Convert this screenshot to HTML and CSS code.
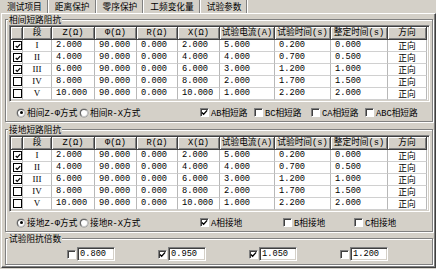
FILE: index.html
```html
<!DOCTYPE html>
<html>
<head>
<meta charset="utf-8">
<link rel="stylesheet" href="styles.css">
</head>
<body>
<div class="tabs">
  <div class="tab">测试项目</div>
  <div class="tab">距离保护</div>
  <div class="tab">零序保护</div>
  <div class="tab">工频变化量</div>
  <div class="tab">试验参数</div>
</div>
<div class="panel">
  <fieldset class="group g1">
    <legend>相间短路阻抗</legend>
    <div class="list">
      <table class="grid">
        <colgroup>
          <col class="c-cb"><col class="c-seg"><col class="c-z"><col class="c-phi"><col class="c-r"><col class="c-x"><col class="c-i"><col class="c-t"><col class="c-set"><col class="c-dir">
        </colgroup>
        <thead>
          <tr><th></th><th>段</th><th>Z(Ω)</th><th>Φ(Ω)</th><th>R(Ω)</th><th>X(Ω)</th><th>试验电流(A)</th><th>试验时间(s)</th><th>整定时间(s)</th><th>方向</th></tr>
        </thead>
        <tbody>
          <tr><td class="cbc"><span class="tcb on"><svg viewBox="0 0 8 8" width="6" height="6"><path d="M1 4 L3 6 L7 1.5" fill="none" stroke="#000" stroke-width="1.6"/></svg></span></td><td class="seg">I</td><td>2.000</td><td>90.000</td><td>0.000</td><td>2.000</td><td>5.000</td><td>0.200</td><td>0.000</td><td class="dir">正向</td></tr>
          <tr><td class="cbc"><span class="tcb on"><svg viewBox="0 0 8 8" width="6" height="6"><path d="M1 4 L3 6 L7 1.5" fill="none" stroke="#000" stroke-width="1.6"/></svg></span></td><td class="seg">II</td><td>4.000</td><td>90.000</td><td>0.000</td><td>4.000</td><td>4.000</td><td>0.700</td><td>0.500</td><td class="dir">正向</td></tr>
          <tr><td class="cbc"><span class="tcb on"><svg viewBox="0 0 8 8" width="6" height="6"><path d="M1 4 L3 6 L7 1.5" fill="none" stroke="#000" stroke-width="1.6"/></svg></span></td><td class="seg">III</td><td>6.000</td><td>90.000</td><td>0.000</td><td>6.000</td><td>3.000</td><td>1.200</td><td>1.000</td><td class="dir">正向</td></tr>
          <tr><td class="cbc"><span class="tcb"></span></td><td class="seg">IV</td><td>8.000</td><td>90.000</td><td>0.000</td><td>8.000</td><td>2.000</td><td>1.700</td><td>1.500</td><td class="dir">正向</td></tr>
          <tr><td class="cbc"><span class="tcb"></span></td><td class="seg">V</td><td>10.000</td><td>90.000</td><td>0.000</td><td>10.000</td><td>1.000</td><td>2.200</td><td>2.000</td><td class="dir">正向</td></tr>
        </tbody>
      </table>
    </div>
    <div class="opts">
      <label class="opt w-r1"><span class="radio on"></span>相间Z-Φ方式</label>
      <label class="opt w-r2"><span class="radio"></span>相间R-X方式</label>
      <label class="opt w-ab"><span class="cb"><svg viewBox="0 0 8 8" width="7" height="7"><path d="M1 4 L3 6 L7 1.5" fill="none" stroke="#000" stroke-width="1.5"/></svg></span>AB相短路</label>
      <label class="opt w-bc"><span class="cb"></span>BC相短路</label>
      <label class="opt w-ca"><span class="cb"></span>CA相短路</label>
      <label class="opt"><span class="cb"></span>ABC相短路</label>
    </div>
  </fieldset>

  <fieldset class="group g2">
    <legend>接地短路阻抗</legend>
    <div class="list">
      <table class="grid">
        <colgroup>
          <col class="c-cb"><col class="c-seg"><col class="c-z"><col class="c-phi"><col class="c-r"><col class="c-x"><col class="c-i"><col class="c-t"><col class="c-set"><col class="c-dir">
        </colgroup>
        <thead>
          <tr><th></th><th>段</th><th>Z(Ω)</th><th>Φ(Ω)</th><th>R(Ω)</th><th>X(Ω)</th><th>试验电流(A)</th><th>试验时间(s)</th><th>整定时间(s)</th><th>方向</th></tr>
        </thead>
        <tbody>
          <tr><td class="cbc"><span class="tcb on"><svg viewBox="0 0 8 8" width="6" height="6"><path d="M1 4 L3 6 L7 1.5" fill="none" stroke="#000" stroke-width="1.6"/></svg></span></td><td class="seg">I</td><td>2.000</td><td>90.000</td><td>0.000</td><td>2.000</td><td>5.000</td><td>0.200</td><td>0.000</td><td class="dir">正向</td></tr>
          <tr><td class="cbc"><span class="tcb on"><svg viewBox="0 0 8 8" width="6" height="6"><path d="M1 4 L3 6 L7 1.5" fill="none" stroke="#000" stroke-width="1.6"/></svg></span></td><td class="seg">II</td><td>4.000</td><td>90.000</td><td>0.000</td><td>4.000</td><td>4.000</td><td>0.700</td><td>0.500</td><td class="dir">正向</td></tr>
          <tr><td class="cbc"><span class="tcb on"><svg viewBox="0 0 8 8" width="6" height="6"><path d="M1 4 L3 6 L7 1.5" fill="none" stroke="#000" stroke-width="1.6"/></svg></span></td><td class="seg">III</td><td>6.000</td><td>90.000</td><td>0.000</td><td>6.000</td><td>3.000</td><td>1.200</td><td>1.000</td><td class="dir">正向</td></tr>
          <tr><td class="cbc"><span class="tcb"></span></td><td class="seg">IV</td><td>8.000</td><td>90.000</td><td>0.000</td><td>8.000</td><td>2.000</td><td>1.700</td><td>1.500</td><td class="dir">正向</td></tr>
          <tr><td class="cbc"><span class="tcb"></span></td><td class="seg">V</td><td>10.000</td><td>90.000</td><td>0.000</td><td>10.000</td><td>1.000</td><td>2.200</td><td>2.000</td><td class="dir">正向</td></tr>
        </tbody>
      </table>
    </div>
    <div class="opts">
      <label class="opt w-r1"><span class="radio on"></span>接地Z-Φ方式</label>
      <label class="opt w-r2"><span class="radio"></span>接地R-X方式</label>
      <label class="opt w-a"><span class="cb"><svg viewBox="0 0 8 8" width="7" height="7"><path d="M1 4 L3 6 L7 1.5" fill="none" stroke="#000" stroke-width="1.5"/></svg></span>A相接地</label>
      <label class="opt w-b"><span class="cb"></span>B相接地</label>
      <label class="opt"><span class="cb"></span>C相接地</label>
    </div>
  </fieldset>

  <fieldset class="group g3">
    <legend>试验阻抗倍数</legend>
    <div class="mults">
      <div class="mult"><span class="cb"></span><span class="field">0.800</span></div>
      <div class="mult"><span class="cb"><svg viewBox="0 0 8 8" width="7" height="7"><path d="M1 4 L3 6 L7 1.5" fill="none" stroke="#000" stroke-width="1.5"/></svg></span><span class="field">0.950</span></div>
      <div class="mult"><span class="cb"><svg viewBox="0 0 8 8" width="7" height="7"><path d="M1 4 L3 6 L7 1.5" fill="none" stroke="#000" stroke-width="1.5"/></svg></span><span class="field">1.050</span></div>
      <div class="mult"><span class="cb"></span><span class="field">1.200</span></div>
    </div>
  </fieldset>
</div>
</body>
</html>
```

FILE: styles.css
```css
* { box-sizing: border-box; }
html, body { margin: 0; padding: 0; }
body {
  width: 436px;
  height: 269px;
  overflow: hidden;
  background: #d4d0c8;
  color: #000;
  font-family: "Liberation Mono", "Noto Sans CJK SC", monospace;
  font-size: 8.7px;
}

/* tab strip */
.tabs {
  display: flex;
  height: 13px;
  padding-left: 1px;
}
.tab {
  font-family: "Noto Sans CJK SC", sans-serif;
  line-height: 13px;
  padding: 0 5px 0 6px;
  border-right: 1px solid #808080;
  margin-right: 1px;
  box-shadow: 1px 0 0 #fff;
}

/* panel */
.panel {
  margin-left: 1px;
  width: 435px;
  height: 255px;
  border: 1px solid;
  border-color: #fff #404040 #404040 #fff;
  box-shadow: inset -1px -1px 0 #808080;
  padding: 0 2px 0 3px;
}

/* group boxes */
.group {
  margin: 0;
  width: 428px;
  padding: 0 1px 3px 3px;
  min-width: 0;
  border: 1px solid #808080;
  box-shadow: inset 1px 1px 0 #fff, 1px 1px 0 #fff;
}
.group legend {
  font-family: "Noto Sans CJK SC", sans-serif;
  line-height: 11px;
  height: 11px;
  padding: 0 1px;
  margin-left: -1px;
  background: #d4d0c8;
}
.g2 { margin-top: 2px; }
.g3 { margin-top: 1px; }

/* list view */
.list {
  width: 421px;
  background: #fff;
  border: 1px solid;
  border-color: #808080 #fff #fff #808080;
  box-shadow: inset 1px 1px 0 #404040, inset -1px -1px 0 #d4d0c8;
  padding: 1px;
}
.grid {
  border-collapse: separate;
  border-spacing: 0;
  table-layout: fixed;
  width: 416px;
}
.c-cb { width: 12px; }
.c-seg { width: 29px; }
.c-z { width: 43px; }
.c-phi { width: 42px; }
.c-r { width: 41px; }
.c-x { width: 42px; }
.c-i { width: 55px; }
.c-t { width: 56px; }
.c-set { width: 57px; }
.c-dir { width: 39px; }

.grid th {
  height: 13px;
  padding: 0;
  font-weight: normal;
  line-height: 12px;
  text-align: center;
  white-space: nowrap;
  overflow: hidden;
  background: #d4d0c8;
  border-right: 1px solid #404040;
  border-bottom: 1px solid #404040;
  box-shadow: inset 1px 1px 0 #fff, inset -1px -1px 0 #808080;
}
.grid td {
  height: 12px;
  padding: 0 0 0 4px;
  line-height: 11px;
  white-space: nowrap;
  overflow: hidden;
  border-right: 1px solid #b8b8b8;
  border-bottom: 1px solid #d0d0d0;
}
.grid td.cbc { padding: 0 0 0 2px; }
.grid td.seg {
  padding: 0;
  text-align: center;
  font-family: "Liberation Serif", serif;
  font-size: 9px;
}
.grid td.dir {
  padding: 0;
  text-align: center;
  font-family: "Noto Sans CJK SC", sans-serif;
}
.tcb {
  display: flex;
  align-items: center;
  justify-content: center;
  width: 9px;
  height: 9px;
  border: 1px solid #000;
  background: #fff;
}

/* option rows */
.opts {
  display: flex;
  align-items: center;
  height: 11px;
  margin-top: 5px;
  padding-left: 8px;
}
.opt {
  display: flex;
  align-items: center;
  gap: 2px;
  white-space: nowrap;
}
.w-r1 { width: 63px; }
.w-r2 { width: 120px; }
.w-ab { width: 54px; }
.w-bc { width: 57px; }
.w-ca { width: 54px; }
.w-a { width: 83px; }
.w-b { width: 71px; }

.radio {
  flex: none;
  position: relative;
  width: 8px;
  height: 8px;
  border-radius: 50%;
  background: #fff;
  border: 1px solid;
  border-color: #606060 #c8c8c8 #c8c8c8 #606060;
  box-shadow: 0 0 0 0.5px #909090;
}
.radio.on::after {
  content: "";
  position: absolute;
  left: 1.5px;
  top: 1.5px;
  width: 3px;
  height: 3px;
  border-radius: 50%;
  background: #000;
}
.cb {
  flex: none;
  display: flex;
  align-items: center;
  justify-content: center;
  width: 9px;
  height: 9px;
  background: #fff;
  border: 1px solid;
  border-color: #808080 #fff #fff #808080;
  box-shadow: inset 1px 1px 0 #404040;
}

/* multiples */
.mults {
  display: flex;
  align-items: center;
  margin-top: 3px;
  padding-left: 58px;
  height: 14px;
}
.mult {
  display: flex;
  align-items: center;
  gap: 1px;
  width: 96px;
}
.field {
  width: 38px;
  height: 14px;
  line-height: 10px;
  padding-left: 2px;
  background: #fff;
  border: 1px solid;
  border-color: #808080 #fff #fff #808080;
  box-shadow: inset 1px 1px 0 #404040, inset -1px -1px 0 #d4d0c8;
  padding-top: 1px;
}
```
